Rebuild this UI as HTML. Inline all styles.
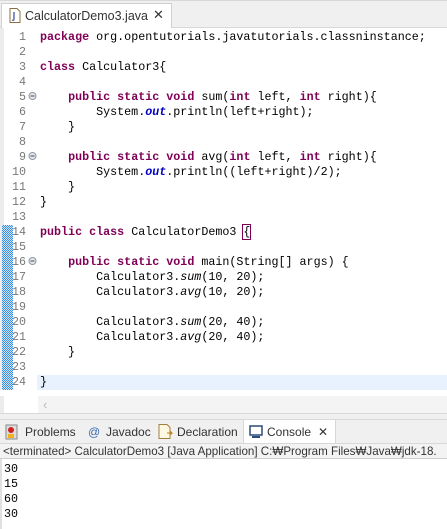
<!DOCTYPE html><html><head><style>
*{margin:0;padding:0;box-sizing:border-box}
body{width:447px;height:529px;overflow:hidden;background:#fff;font-family:"Liberation Sans",sans-serif;position:relative}
.a{position:absolute}
.code{font-family:"Liberation Mono",monospace;font-size:11.7px;line-height:15px;white-space:pre;color:#000}
.k{color:#7f0055;font-weight:bold}
.i{font-style:italic}
.f{color:#0000c0;font-weight:bold;font-style:italic}
.ln{font-family:"Liberation Mono",monospace;font-size:11.7px;line-height:15px;color:#787878;text-align:right;width:26px;white-space:pre}
.t{font-size:12px;color:#333;white-space:nowrap}
</style></head><body>
<div class="a" style="left:0;top:0;width:447px;height:28px;background:#f0f0f0;border-top:1px solid #d8d8d8;border-bottom:1px solid #d8d8d8"></div>
<div class="a" style="left:1px;top:3px;width:171px;height:25px;background:#fff;border:1px solid #d0d0d0;border-bottom:none"></div>
<svg class="a" style="left:9px;top:8px" width="12" height="15"><path d="M1 .5h7l3 3V14.5H1z" fill="#fff" stroke="#8a7040"/><path d="M5 4v7q0 2-2 1" stroke="#5a6ab0" stroke-width="1.5" fill="none"/></svg>
<div class="a t" style="left:25px;top:9px;font-size:12.5px">CalculatorDemo3.java</div>
<div class="a" style="left:153px;top:7px;font-size:13px;color:#333">✕</div>
<div class="a" style="left:0;top:28px;width:4px;height:385px;background:#ececec"></div>
<div class="a" style="left:2px;top:225px;width:11px;height:165px;background:repeating-conic-gradient(#3a8ee0 0 25%,#cfe4fa 0 50%) 0 0/2px 2px"></div>
<div class="a" style="left:37px;top:375px;width:410px;height:15px;background:#e8f2fe"></div>
<div class="a ln" style="left:0;top:30px">1
2
3
4
5
6
7
8
9
10
11
12
13
14
15
16
17
18
19
20
21
22
23
24
25</div>
<div class="a" style="left:0;top:390px;width:447px;height:6px;background:#fff"></div>
<svg class="a" style="left:28px;top:90px" width="10" height="200"><g fill="#e8e8e8" stroke="#8a98a8"><circle cx="4.5" cy="6" r="3.5"/><circle cx="4.5" cy="66" r="3.5"/><circle cx="4.5" cy="171" r="3.5"/></g><g stroke="#445" stroke-width="1"><path d="M2.5 6h4M2.5 66h4M2.5 171h4"/></g></svg>
<div class="a code" style="left:40px;top:30px"><span class="k">package</span> org.opentutorials.javatutorials.classninstance;

<span class="k">class</span> Calculator3{

    <span class="k">public</span> <span class="k">static</span> <span class="k">void</span> sum(<span class="k">int</span> left, <span class="k">int</span> right){
        System.<span class="f">out</span>.println(left+right);
    }

    <span class="k">public</span> <span class="k">static</span> <span class="k">void</span> avg(<span class="k">int</span> left, <span class="k">int</span> right){
        System.<span class="f">out</span>.println((left+right)/2);
    }
}

<span class="k">public</span> <span class="k">class</span> CalculatorDemo3 <span style="outline:1px solid #7f0055">{</span>

    <span class="k">public</span> <span class="k">static</span> <span class="k">void</span> main(String[] args) {
        Calculator3.<span class="i">sum</span>(10, 20);
        Calculator3.<span class="i">avg</span>(10, 20);

        Calculator3.<span class="i">sum</span>(20, 40);
        Calculator3.<span class="i">avg</span>(20, 40);
    }

}</div>
<div class="a" style="left:0;top:396px;width:447px;height:17px;background:#fff"></div>
<div class="a" style="left:38px;top:396px;width:409px;height:17px;background:#f4f4f4"></div>
<div class="a" style="left:0;top:396px;width:4px;height:17px;background:#ececec"></div>
<div class="a" style="left:43px;top:397px;font-size:13px;color:#bbb">‹</div>
<div class="a" style="left:0;top:413px;width:447px;height:6px;background:#f0f0f0;border-top:1px solid #d8d8d8"></div>
<div class="a" style="left:0;top:419px;width:447px;height:24px;background:#f0f0f0;border-top:1px solid #d8d8d8"></div>
<div class="a" style="left:243px;top:419px;width:93px;height:24px;background:#fff;border:1px solid #d8d8d8;border-bottom:none"></div>
<svg class="a" style="left:5px;top:424px" width="14" height="16"><rect x="1" y="1" width="11" height="14" fill="#ddd" stroke="#888"/><circle cx="6" cy="6" r="3" fill="#d02020"/><rect x="3" y="10" width="6" height="4" fill="#f0b020"/></svg>
<div class="a t" style="left:25px;top:425px">Problems</div>
<div class="a" style="left:88px;top:425px;font-size:12px;color:#3a6ab0">@</div>
<div class="a t" style="left:106px;top:425px">Javadoc</div>
<svg class="a" style="left:158px;top:424px" width="15" height="16"><path d="M1 .5h8l3 3V14.5H1z" fill="#fff8e0" stroke="#a08040"/><path d="M9 9h5l-2-2M14 9l-2 2" stroke="#c08020" fill="none"/></svg>
<div class="a t" style="left:177px;top:425px">Declaration</div>
<svg class="a" style="left:249px;top:425px" width="14" height="14"><rect x="1" y="1" width="12" height="9" fill="#fff" stroke="#2a4a7a" stroke-width="1.5"/><rect x="3" y="11" width="8" height="2" fill="#2a4a7a"/></svg>
<div class="a t" style="left:267px;top:425px">Console</div>
<div class="a" style="left:318px;top:425px;font-size:12px;color:#333">✕</div>
<div class="a" style="left:0;top:443px;width:447px;height:16px;background:#f3f3f3;border-bottom:1px solid #cfcfcf;border-top:1px solid #d8d8d8;overflow:hidden"><div class="t" style="position:absolute;left:3px;top:1px;font-size:11.6px">&lt;terminated&gt; CalculatorDemo3 [Java Application] C:₩Program Files₩Java₩jdk-18.</div></div>
<div class="a code" style="left:4px;top:462px">30
15
60
30</div>
<div class="a" style="left:0;top:459px;width:2px;height:70px;background:#e0e0e0"></div>
</body></html>
